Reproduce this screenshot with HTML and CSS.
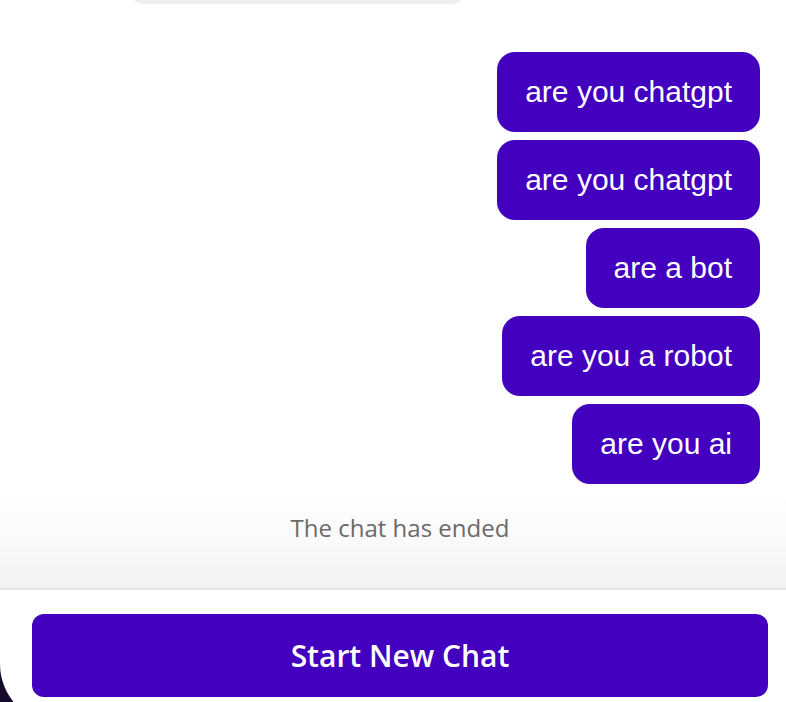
FILE: index.html
```html
<!DOCTYPE html>
<html lang="en">
<head>
<meta charset="UTF-8" />
<meta name="viewport" content="width=device-width, initial-scale=1" />
<title>Chat</title>
<link rel="stylesheet" href="styles.css">
</head>
<body>

<div class="widget">
  <div class="messages">
    <div class="bubble agent"></div>
    <div class="bubble user">are you chatgpt</div>
    <div class="bubble user">are you chatgpt</div>
    <div class="bubble user">are a bot</div>
    <div class="bubble user">are you a robot</div>
    <div class="bubble user">are you ai</div>
  </div>

  <div class="ended">The chat has ended</div>

  <div class="footer">
    <button class="new-chat">Start New Chat</button>
  </div>
</div>

</body>
</html>
```

FILE: styles.css
```css
/* --- Genel --- */
body {
  margin: 0;
  padding: 0;
  background-color: #150a2c;
  overflow: hidden;
  font-family: "Open Sans", Arial, sans-serif;
}
.widget {
  width: 800px;
  height: 724px;
  background-color: #fff;
  border-radius: 0 0 60px 60px;
  display: flex;
  flex-direction: column;
  overflow: hidden;
}

/* Mesajlar */
.messages {
  display: flex;
  flex-direction: column;
  align-items: flex-end;
  gap: 8px;
  padding: 0 40px;
}
.bubble {
  font-family: "Liberation Sans", Arial, sans-serif;
  font-size: 30px;
  line-height: 36px;
  padding: 22px 28px;
  border-radius: 18px;
}
.bubble.user {
  background-color: #4300bf;
  color: #fff;
}
.bubble.agent {
  align-self: flex-start;
  width: 341px;
  height: 40px;
  padding: 0;
  margin: -36px 0 40px 87px;
  background-color: #eeeeee;
}

/* Sohbet bitti */
.ended {
  margin-top: 4px;
  padding: 25px 0 45px 0;
  line-height: 30px;
  font-size: 24px;
  color: #6a6a6a;
  text-align: center;
  background: linear-gradient(to bottom, #ffffff 0%, #fafafa 50%, #f2f2f2 100%);
  border-bottom: 2px solid #e6e6e6;
}

/* Alt buton */
.footer {
  padding: 24px 32px;
}
.new-chat {
  width: 100%;
  height: 83px;
  border: none;
  border-radius: 12px;
  background-color: #4300bf;
  color: #fff;
  font-family: "Open Sans", Arial, sans-serif;
  font-weight: 600;
  font-size: 30px;
  cursor: pointer;
}
```
